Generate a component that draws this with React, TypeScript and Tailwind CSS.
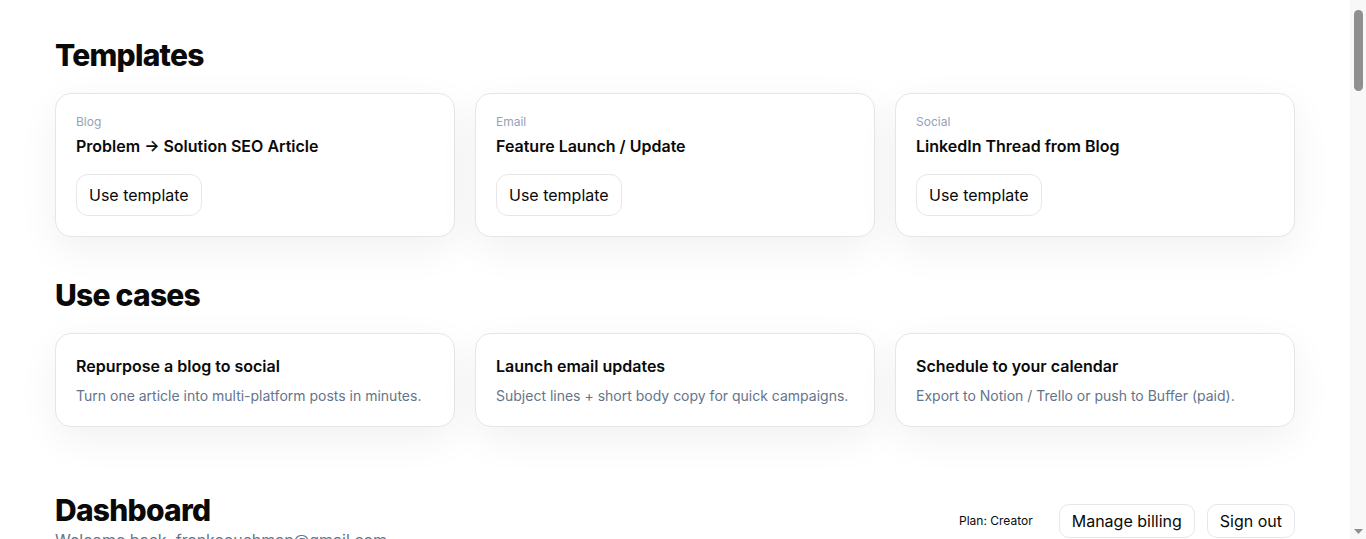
import React from "react";

const templates = [
  { cat: "Blog", title: "Problem → Solution SEO Article" },
  { cat: "Email", title: "Feature Launch / Update" },
  { cat: "Social", title: "LinkedIn Thread from Blog" },
];

const useCases = [
  { title: "Repurpose a blog to social", desc: "Turn one article into multi-platform posts in minutes." },
  { title: "Launch email updates", desc: "Subject lines + short body copy for quick campaigns." },
  { title: "Schedule to your calendar", desc: "Export to Notion / Trello or push to Buffer (paid)." },
];

const card =
  "rounded-2xl border border-[#e6e6ea] bg-white p-5 shadow-[0_12px_40px_rgba(0,0,0,0.06)]";

export default function App() {
  return (
    <div
      className="flex h-[539px] overflow-hidden bg-white text-[#0a0a0a]"
      style={{ fontFamily: "Inter, 'Noto Sans', sans-serif" }}
    >
      <div className="min-w-0 flex-1">
        <main className="mx-auto w-full max-w-[1240px] pt-[37px] pb-20">
          <section>
            <h2 className="mb-5 text-[30px] leading-9 font-extrabold tracking-tight">Templates</h2>
            <div className="grid grid-cols-3 gap-5">
              {templates.map((t) => (
                <div key={t.title} className={card}>
                  <div className="text-xs leading-4 text-[#94a3b8]">{t.cat}</div>
                  <div className="mt-1 text-base leading-6 font-semibold">{t.title}</div>
                  <button className="mt-4 rounded-xl border border-[#e5e7eb] bg-white px-3 py-2 text-base leading-6 text-[#0a0a0a]">
                    Use template
                  </button>
                </div>
              ))}
            </div>
          </section>

          <section className="mt-10">
            <h2 className="mb-5 text-[30px] leading-9 font-extrabold tracking-tight">Use cases</h2>
            <div className="grid grid-cols-3 gap-5">
              {useCases.map((u) => (
                <div key={u.title} className={card}>
                  <div className="text-base leading-6 font-semibold">{u.title}</div>
                  <div className="mt-2 text-sm leading-5 text-[#64748b]">{u.desc}</div>
                </div>
              ))}
            </div>
          </section>

          <section className="mt-[65px]">
            <div className="flex items-center justify-between">
              <div>
                <h1 className="text-[30px] leading-9 font-extrabold tracking-tight">Dashboard</h1>
                <p className="text-base leading-6 text-[#64748b]">Welcome back, frankcouchman@gmail.com</p>
              </div>
              <div className="-mt-0.5 flex items-center gap-3">
                <span className="mr-3.5 text-xs text-[#0a0a0a]">Plan: Creator</span>
                <button className="rounded-[10px] border border-[#e5e7eb] bg-white px-3 py-1 text-base leading-6">
                  Manage billing
                </button>
                <button className="rounded-[10px] border border-[#e5e7eb] bg-white px-3 py-1 text-base leading-6">
                  Sign out
                </button>
              </div>
            </div>
            <div className="mt-8 grid grid-cols-3 gap-5">
              {["Drafts", "Scheduled", "Published"].map((s) => (
                <div key={s} className={card}>
                  <div className="text-xs leading-4 text-[#94a3b8]">{s}</div>
                  <div className="mt-1 text-2xl font-semibold">0</div>
                </div>
              ))}
            </div>
          </section>
        </main>
      </div>
      <aside className="flex w-[16px] shrink-0 flex-col items-center justify-between bg-[#f8f8f8] pt-[10px] pb-[5px]">
        <div className="h-[81px] w-[9px] rounded-full bg-[#8f8f8f]" />
        <svg width="9" height="5" viewBox="0 0 9 5" aria-hidden>
          <path d="M0 0h9L4.5 5z" fill="#8f8f8f" />
        </svg>
      </aside>
    </div>
  );
}
